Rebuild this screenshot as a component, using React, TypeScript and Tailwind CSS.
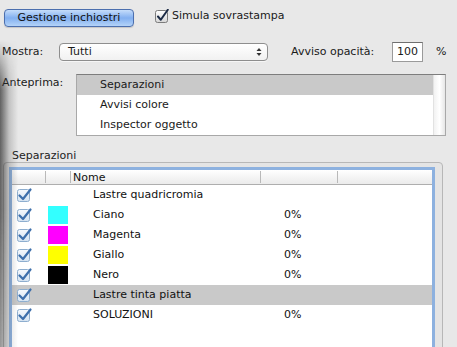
import React from 'react';

type Row = {
  name: string;
  swatch?: string;
  value?: string;
  selected?: boolean;
};

const rows: Row[] = [
  { name: 'Lastre quadricromia' },
  { name: 'Ciano', swatch: 'bg-[#33ffff]', value: '0%' },
  { name: 'Magenta', swatch: 'bg-[#ff00ff]', value: '0%' },
  { name: 'Giallo', swatch: 'bg-[#ffff00]', value: '0%' },
  { name: 'Nero', swatch: 'bg-[#000000]', value: '0%' },
  { name: 'Lastre tinta piatta', selected: true },
  { name: 'SOLUZIONI', value: '0%' },
];

function AquaCheck() {
  return (
    <svg width="14" height="14" viewBox="0 0 14 14" className="shrink-0">
      <defs>
        <linearGradient id="aq" x1="0" y1="0" x2="0" y2="1">
          <stop offset="0" stopColor="#ffffff" />
          <stop offset="1" stopColor="#d6d6d6" />
        </linearGradient>
      </defs>
      <rect x="0.5" y="1.5" width="12" height="12" rx="2" fill="url(#aq)" stroke="#7c7c7c" />
      <path d="M3 7.5 L5.8 10.8 L12.8 0.8" fill="none" stroke="#1c2b45" strokeWidth="2" strokeLinecap="round" strokeLinejoin="round" />
    </svg>
  );
}

function ListCheck() {
  return (
    <svg width="16" height="16" viewBox="0 0 16 16" className="shrink-0">
      <defs>
        <linearGradient id="lc" x1="0" y1="0" x2="0" y2="1">
          <stop offset="0" stopColor="#f4f8fc" />
          <stop offset="1" stopColor="#d5e3f1" />
        </linearGradient>
      </defs>
      <rect x="1.5" y="2.5" width="12" height="12" rx="2" fill="url(#lc)" stroke="#8eaecf" />
      <path d="M3.5 8.5 L7 12 L14.5 2.5" fill="none" stroke="#3e6fab" strokeWidth="2.2" strokeLinecap="round" strokeLinejoin="round" />
    </svg>
  );
}

function HeaderCell({ label, className }: { label?: string; className: string }) {
  return (
    <div className={`flex items-center ${className}`}>
      <div className="h-[12px] w-px bg-[#b9b9b9]" />
      {label && <span className="pl-[2px] leading-none text-[#111]">{label}</span>}
    </div>
  );
}

export default function App() {
  return (
    <div className="relative h-[347px] w-[457px] overflow-hidden bg-[#e8e8e8] font-['Lucida_Grande','DejaVu_Sans',sans-serif] text-[11px] text-[#1a1a1a]">
      <div className="flex h-[27px] items-end pl-[4px]">
        <button
          type="button"
          className="flex h-[18px] w-[130px] items-center justify-center rounded-[4px] border border-[#4c6fae] bg-gradient-to-b from-[#c6ddfa] via-[#82aff0] to-[#b4d3f8] text-[11px] text-[#111] shadow-[0_1px_1px_rgba(0,0,0,0.15)]"
        >
          Gestione inchiostri
        </button>
        <div className="mb-[3px] ml-[21px] flex items-center gap-[3px]">
          <AquaCheck />
          <span>Simula sovrastampa</span>
        </div>
      </div>

      <div className="mt-[15px] flex h-[20px] items-center">
        <span className="w-[59px] pl-[2px]">Mostra:</span>
        <div className="flex h-[18px] w-[209px] items-center rounded-[4px] border border-[#8e8e8e] bg-gradient-to-b from-white to-[#f1f1f1] pl-[8px] shadow-[0_1px_0_rgba(255,255,255,0.6)]">
          <span>Tutti</span>
          <svg width="6" height="10" viewBox="0 0 6 10" className="ml-auto mr-[5px]">
            <path d="M0.5 4 L3 1 L5.5 4 Z" fill="#333" />
            <path d="M0.5 6 L3 9 L5.5 6 Z" fill="#333" />
          </svg>
        </div>
        <span className="ml-[23px] w-[101px]">Avviso opacità:</span>
        <div className="flex h-[20px] w-[31px] items-center justify-center border border-[#9a9a9a] border-t-[#6f6f6f] bg-white">
          100
        </div>
        <span className="ml-[13px]">%</span>
      </div>

      <div className="mt-[12px] flex">
        <span className="w-[76px] pl-[2px] pt-px">Anteprima:</span>
        <div className="flex h-[62px] w-[370px] border border-[#a8a8a8] border-t-[#7d7d7d] bg-white">
          <div className="flex flex-1 flex-col">
            <div className="flex h-[20px] items-center bg-[#c9c9c9] pl-[23px]">Separazioni</div>
            <div className="flex h-[20px] items-center pl-[23px]">Avvisi colore</div>
            <div className="flex h-[20px] items-center pl-[23px]">Inspector oggetto</div>
          </div>
          <div className="w-[12px] border-l border-[#e2e2e2] bg-gradient-to-r from-[#f2f2f2] via-white to-[#e6e6e6]" />
        </div>
      </div>

      <div className="mt-[13px] h-[13px] pl-[12px] leading-[13px] text-[#222]">Separazioni</div>

      <div className="ml-[3px] h-[200px] w-[440px] rounded-[4px] border border-[#b7b7b7] bg-[#e4e4e4] pl-[5px] pt-[4px]">
        <div className="h-[190px] w-[426px] border-[3px] border-[#8db1df] bg-white">
          <div className="flex h-[15px] border-b border-[#aeaeae] bg-gradient-to-b from-white to-[#ebebeb]">
            <div className="w-[33px]" />
            <HeaderCell className="w-[25px]" />
            <HeaderCell className="w-[190px]" label="Nome" />
            <HeaderCell className="w-[77px]" />
            <HeaderCell className="flex-1" />
          </div>
          {rows.map((r) => (
            <div
              key={r.name}
              className={`flex h-[20px] items-center ${r.selected ? 'bg-[#c9c9c9]' : ''}`}
            >
              <div className="flex w-[33px] items-center pl-[4px]">
                <ListCheck />
              </div>
              <div className="flex w-[25px] items-center pl-[3px]">
                {r.swatch && <div className={`h-[18px] w-[20px] ${r.swatch}`} />}
              </div>
              <div className="w-[190px] pl-[23px] text-[#111]">{r.name}</div>
              <div className="w-[77px] pl-[24px] text-[#111]">{r.value}</div>
            </div>
          ))}
        </div>
      </div>

      <div className="pointer-events-none absolute bottom-0 left-0 top-[40px] w-[18px] bg-gradient-to-r from-[rgba(40,40,40,0.7)] via-[rgba(80,80,80,0.25)] to-transparent [mask-image:linear-gradient(to_bottom,transparent,black_50px,black_55%,rgba(0,0,0,0.6))]" />
    </div>
  );
}
